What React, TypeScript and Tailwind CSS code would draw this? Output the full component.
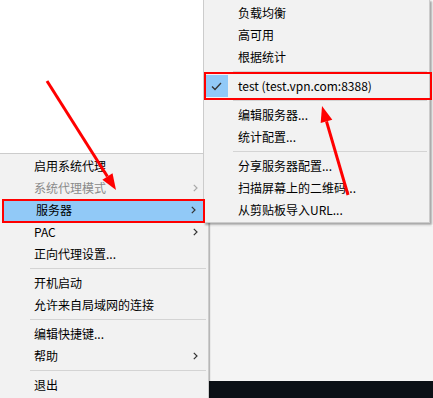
import React from "react";

const font = { fontFamily: '"Noto Sans CJK SC", "Microsoft YaHei", sans-serif' };

function Chevron({ disabled }: { disabled?: boolean }) {
  return (
    <svg width="5" height="8" viewBox="0 0 5 8" className="ml-auto mr-[10px]">
      <path d="M0.8 0.8 L4 4 L0.8 7.2" fill="none" stroke={disabled ? "#a8a8a8" : "#333"} strokeWidth="1.2" />
    </svg>
  );
}

function Item({
  label,
  sub,
  disabled,
  active,
  checked,
}: {
  label: string;
  sub?: boolean;
  disabled?: boolean;
  active?: boolean;
  checked?: boolean;
}) {
  return (
    <div
      className={
        "relative h-[22px] flex items-center pl-[34px] text-[12px] leading-none whitespace-nowrap " +
        (disabled ? "text-[#8a8a8a] " : "text-black ") +
        (active ? "bg-[#91c9f7] mx-[2px] pl-[32px]" : "")
      }
    >
      {checked && (
        <div className="absolute left-[1px] top-0 w-[23px] h-[22px] bg-[#91c9f7] flex items-center justify-center">
          <svg width="11" height="9" viewBox="0 0 11 9">
            <path d="M1 4.5 L4 7.5 L10 1" fill="none" stroke="#333" strokeWidth="1.3" />
          </svg>
        </div>
      )}
      <span>{label}</span>
      {sub && <Chevron disabled={disabled} />}
    </div>
  );
}

function Sep({ left = 30 }: { left?: number }) {
  return (
    <div className="h-[7px] flex items-center">
      <div className={"h-px bg-[#d4d4d4] mr-[2px] flex-1 " + (left === 30 ? "ml-[30px]" : "ml-[29px]")} />
    </div>
  );
}

export default function App() {
  return (
    <div className="relative w-[433px] h-[398px] overflow-hidden bg-white" style={font}>
      {/* background area right bottom */}
      <div className="absolute left-[209px] top-[226px] right-0 bottom-0 bg-[#f4f4f4] flex flex-col">
        <div className="flex-1" />
        <div className="h-[17px] bg-[#0b1016]" />
      </div>

      {/* main menu */}
      <div className="absolute left-[-1px] top-[153px] w-[210px] h-[260px] bg-[#f2f2f2] border border-[#cccccc] pt-[1px] shadow-[1px_1px_1px_rgba(0,0,0,0.25)]">
        <Item label="启用系统代理" />
        <Item label="系统代理模式" sub disabled />
        <Item label="服务器" sub active />
        <Item label="PAC" sub />
        <Item label="正向代理设置..." />
        <Sep />
        <Item label="开机启动" />
        <Item label="允许来自局域网的连接" />
        <Sep />
        <Item label="编辑快捷键..." />
        <Item label="帮助" sub />
        <Sep />
        <Item label="退出" />
      </div>

      {/* sub menu */}
      <div className="absolute left-[203px] top-[-1px] w-[227px] bg-[#f2f2f2] border border-[#cccccc] pt-[2px] pb-[1px] shadow-[2px_2px_2px_rgba(0,0,0,0.35)]">
        <Item label="负载均衡" />
        <Item label="高可用" />
        <Item label="根据统计" />
        <Sep left={29} />
        <Item label="test (test.vpn.com:8388)" checked />
        <Sep left={29} />
        <Item label="编辑服务器..." />
        <Item label="统计配置..." />
        <Sep left={29} />
        <Item label="分享服务器配置..." />
        <Item label="扫描屏幕上的二维码..." />
        <Item label="从剪贴板导入URL..." />
      </div>

      {/* annotation red boxes */}
      <div className="absolute left-[2px] top-[199px] w-[203px] h-[24px] border-2 border-[#ff0000]" />
      <div className="absolute left-[204px] top-[72px] w-[228px] h-[28px] border-2 border-[#ff0000]" />

      {/* arrows */}
      <svg className="absolute left-0 top-0 pointer-events-none" width="433" height="398" viewBox="0 0 433 398">
        <line x1="47" y1="81" x2="107.4" y2="176.5" stroke="#ff0000" strokeWidth="3" />
        <polygon points="116,190 102.4,179.7 112.5,173.3" fill="#ff0000" />
        <line x1="348" y1="195" x2="326.5" y2="121.4" stroke="#ff0000" strokeWidth="3" />
        <polygon points="322,106 332.3,119.7 320.7,123.1" fill="#ff0000" />
      </svg>
    </div>
  );
}
